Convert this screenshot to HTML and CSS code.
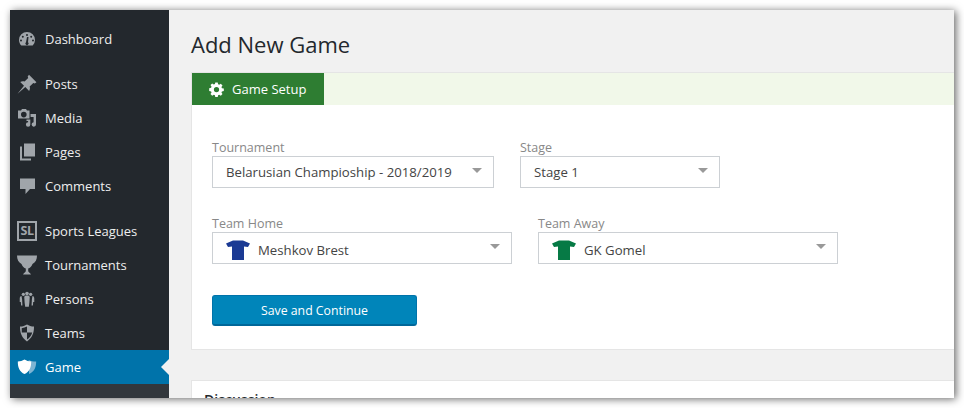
FILE: index.html
```html
<!DOCTYPE html>
<html lang="en">
<head>
<meta charset="utf-8">
<title>Add New Game</title>
<link rel="stylesheet" href="styles.css">
</head>
<body>
<div class="window">
  <nav class="sidebar">
    <ul class="menu">
      <li class="item group-end"><svg class="icon" viewBox="0 0 20 20"><path fill-rule="evenodd" d="M10 3a8 8 0 0 0-8 8c0 2.200.9 4.200 2.300 5.600h11.400A8 8 0 0 0 18 11a8 8 0 0 0-8-8zM10 5a1 1 0 1 1 0 2 1 1 0 0 1 0-2zM5.800 6.800a1 1 0 1 1 0 2 1 1 0 0 1 0-2zM14.200 6.800a1 1 0 1 1 0 2 1 1 0 0 1 0-2zM4 10.500a1 1 0 1 1 0 2 1 1 0 0 1 0-2zM16 10.500a1 1 0 1 1 0 2 1 1 0 0 1 0-2zM11.500 8l-.5 5.200a1.600 1.600 0 1 1-2 0L10 8z"/></svg><span>Dashboard</span></li>
      <li class="item"><svg class="icon" viewBox="1 .8 18 18"><path d="M11.800 1.500l6.700 6.700-1.500 1.200-1.300-.6-3.300 3.300c.5 1.500.3 2.800-.5 3.900L8.500 12.600 1.500 18.500l5.800-7.100-3.400-3.300c1.100-.8 2.500-1 3.900-.5l3.300-3.300-.5-1.300z"/></svg><span>Posts</span></li>
      <li class="item"><svg class="icon" viewBox="0 0 20 20"><path fill-rule="evenodd" d="M1 2.500h3L5 1h4l1 1.500h2.500v8H1zM6.800 3.800a2.800 2.800 0 1 0 0 5.600 2.800 2.800 0 0 0 0-5.600zM13.500 6H19v10.500a2.200 2.200 0 1 1-2.400-2.200V9h-3zM9.500 11.500h3.800v5a2.200 2.200 0 1 1-2.200-2.200v-1.300h-1.600z"/></svg><span>Media</span></li>
      <li class="item"><svg class="icon" viewBox="0 0 20 20"><path d="M7 1.500h11v13H7z"/><path d="M5 4.500v12h9v2H3v-14z"/></svg><span>Pages</span></li>
      <li class="item group-end"><svg class="icon" viewBox="0 0 20 20"><path d="M3 2.500h15v10.500h-5l-4.500 5v-5H3z"/></svg><span>Comments</span></li>
      <li class="item"><span class="sl">SL</span><span>Sports Leagues</span></li>
      <li class="item"><svg class="icon" viewBox="0 0 20 20"><path d="M0 .5H20C20 4.500 18.500 7.500 15.500 9 14.500 11.500 13 13 11.200 13.500V16C11.200 17 13 17.500 14 19.500H6C7 17.500 8.800 17 8.800 16V13.500C7 13 5.500 11.500 4.500 9 1.500 7.500 0 4.500 0 .5Z"/></svg><span>Tournaments</span></li>
      <li class="item"><svg class="icon" viewBox="-1 -1 22 22"><circle cx="6" cy="4.800" r="1.800"/><circle cx="14" cy="4.800" r="1.800"/><circle cx="10" cy="4" r="2"/><path d="M2 9.500c0-2 1-2.800 2-2.800l.6 3.500.4 7H3.500l-.3-4H2zM18 9.500c0-2-1-2.800-2-2.800l-.6 3.500-.4 7h1.500l.3-4H18zM7 8c0-1.200 1-1.800 3-1.800s3 .6 3 1.800l-.4 6-.6 4.500H8L7.400 14z"/></svg><span>Persons</span></li>
      <li class="item"><svg class="icon" viewBox="0 0 20 20"><path d="M10 1.500c2 1.300 4.300 2 7 2.100.2 6.500-2 11.500-7 14.900-5-3.400-7.200-8.400-7-14.900 2.700-.100 5-.8 7-2.100z" fill="#a0a5aa"/><path d="M10 3.500v6H4.800c0-1.300-.1-2.600-.1-4.300C6.700 5 8.400 4.400 10 3.500zM10 9.500h5.200c-.8 3.100-2.600 5.400-5.200 7.100z" fill="#23282d"/></svg><span>Teams</span></li>
      <li class="item current"><svg class="icon" viewBox="0 0 24 20"><path d="M14 1.500c2.500 1.300 5 1.900 9 2 0 7-2 12-8.500 15z" fill="#7db4d3"/><path d="M9 1c2.500 1.500 5 2.200 8 2.300.2 7.200-2.300 12.400-8 15.200C3.300 15.700.8 10.500 1 3.300 4 3.200 6.500 2.500 9 1z" fill="#fff"/></svg><span>Game</span></li>
    </ul>
    <div class="sidebar-foot"></div>
  </nav>
  <main class="content">
    <h1 class="title">Add New Game</h1>
    <section class="card setup">
      <div class="tabs">
        <div class="tab"><svg class="gear" viewBox="0 0 16 16"><path fill-rule="evenodd" d="M6.700.5h2.600l.4 2 1.200.5 1.700-1.100 1.800 1.800-1.100 1.700.5 1.200 2 .4v2.600l-2 .4-.5 1.200 1.100 1.700-1.800 1.800-1.700-1.100-1.200.5-.4 2H6.700l-.4-2-1.200-.5-1.700 1.100-1.800-1.800 1.100-1.700-.5-1.200-2-.4V6.600l2-.4.5-1.200-1.100-1.700 1.800-1.800 1.700 1.100 1.200-.5zM8 5.200a2.800 2.800 0 1 0 0 5.600 2.800 2.800 0 0 0 0-5.600z"/></svg><span>Game Setup</span></div>
      </div>
      <form class="form">
        <div class="row">
          <div class="field">
            <label class="label">Tournament</label>
            <div class="select w-tournament"><span class="value">Belarusian Champioship - 2018/2019</span><i class="caret"></i></div>
          </div>
          <div class="field">
            <label class="label">Stage</label>
            <div class="select w-stage"><span class="value">Stage 1</span><i class="caret"></i></div>
          </div>
        </div>
        <div class="row">
          <div class="field">
            <label class="label">Team Home</label>
            <div class="select w-team"><svg class="shirt shirt-home" viewBox="0 0 24 20"><path d="M7 .5h10l7 3-2 3.500-4-.5V20H6V6.500L2 7 0 3.500z"/></svg><span class="value">Meshkov Brest</span><i class="caret"></i></div>
          </div>
          <div class="field">
            <label class="label">Team Away</label>
            <div class="select w-team"><svg class="shirt shirt-away" viewBox="0 0 24 20"><path d="M7 .5h10l7 3-2 3.500-4-.5V20H6V6.500L2 7 0 3.500z"/></svg><span class="value">GK Gomel</span><i class="caret"></i></div>
          </div>
        </div>
        <button class="save" type="button">Save and Continue</button>
      </form>
    </section>
    <section class="card discussion">
      <h2 class="card-title">Discussion</h2>
    </section>
  </main>
</div>
</body>
</html>
```
FILE: styles.css
```css
* { box-sizing: border-box; }
html, body { margin: 0; height: 100%; background: #fff; overflow: hidden; }
body { padding: 10px; font-family: "Open Sans", "Noto Sans", sans-serif; font-size: 13px; }
.window {
  width: 944px; height: 388px; display: flex; overflow: hidden;
  background: #f1f1f1; box-shadow: 2px 1px 8px rgba(0,0,0,.6);
}
.sidebar { width: 159px; flex: none; display: flex; flex-direction: column; background: #23282d; }
.menu { list-style: none; margin: 0; padding: 12px 0 0; }
.item { height: 34px; display: flex; align-items: center; color: #eee; padding-left: 7px; position: relative; font-size: 13px; }
.item > span:last-child { position: absolute; left: 35px; }
.group-end { margin-bottom: 11px; }
.icon { width: 20px; height: 20px; fill: #a0a5aa; flex: none; }
.sl {
  width: 20px; height: 20px; border: 2px solid #a0a5aa; color: #a0a5aa;
  font-size: 12.500px; font-weight: 700; line-height: 16px; text-align: center; letter-spacing: -.5px;
}
.current { background: #0073aa; color: #fff; }
.current::after {
  content: ""; position: absolute; right: 0; top: 9px;
  border: 8px solid transparent; border-right-color: #f1f1f1; border-left-width: 0;
}
.sidebar-foot { flex: 1; background: #32373c; }
.content { flex: 1; min-width: 0; padding-left: 22px; overflow: hidden; }
.title { margin: 0; padding-top: 19px; height: 62px; font-size: 22px; line-height: 30px; font-weight: 400; color: #23282d; }
.card { background: #fff; border: 1px solid #e5e5e5; margin-right: -1px; }
.setup { height: 278px; }
.tabs { height: 32px; background: #f1f8e9; }
.tab {
  width: 132px; height: 32px; background: #2e7d32; color: #fff; display: flex; align-items: center;
  padding-left: 17px; gap: 8px; font-size: 13px;
}
.gear { width: 15px; height: 15px; fill: #fff; flex: none; }
.form { padding: 33px 20px 0; }
.row { display: flex; gap: 26px; margin-bottom: 26px; }
.label { display: block; color: #888; font-size: 12.500px; line-height: 16px; padding-top: 2px; }
.select {
  height: 32px; border: 1px solid #ccd0d4; background: #fff; color: #444;
  display: flex; align-items: center; padding-left: 13px; position: relative;
}
.value { font-size: 13.200px; }
.w-tournament { width: 282px; }
.w-stage { width: 200px; }
.w-team { width: 300px; padding-top: 4px; }
.caret {
  position: absolute; right: 11px; top: 11px; border: 5px solid transparent;
  border-top: 5px solid #999; border-bottom-width: 0;
}
.shirt { width: 24px; height: 20px; margin-right: 8px; flex: none; }
.shirt-home { fill: #1b3a94; }
.shirt-away { fill: #067a45; }
.save {
  display: block; width: 205px; height: 31px; margin-top: 31px; padding: 0;
  background: #0085ba; border: 1px solid #0073aa; border-bottom: 2px solid #006799; border-radius: 3px;
  color: #fff; font: inherit; font-size: 12.300px;
}
.discussion { margin-top: 30px; height: 60px; padding: 9px 12px; }
.card-title { margin: 0; font-size: 14px; font-weight: 600; color: #23282d; line-height: 20px; }
```
